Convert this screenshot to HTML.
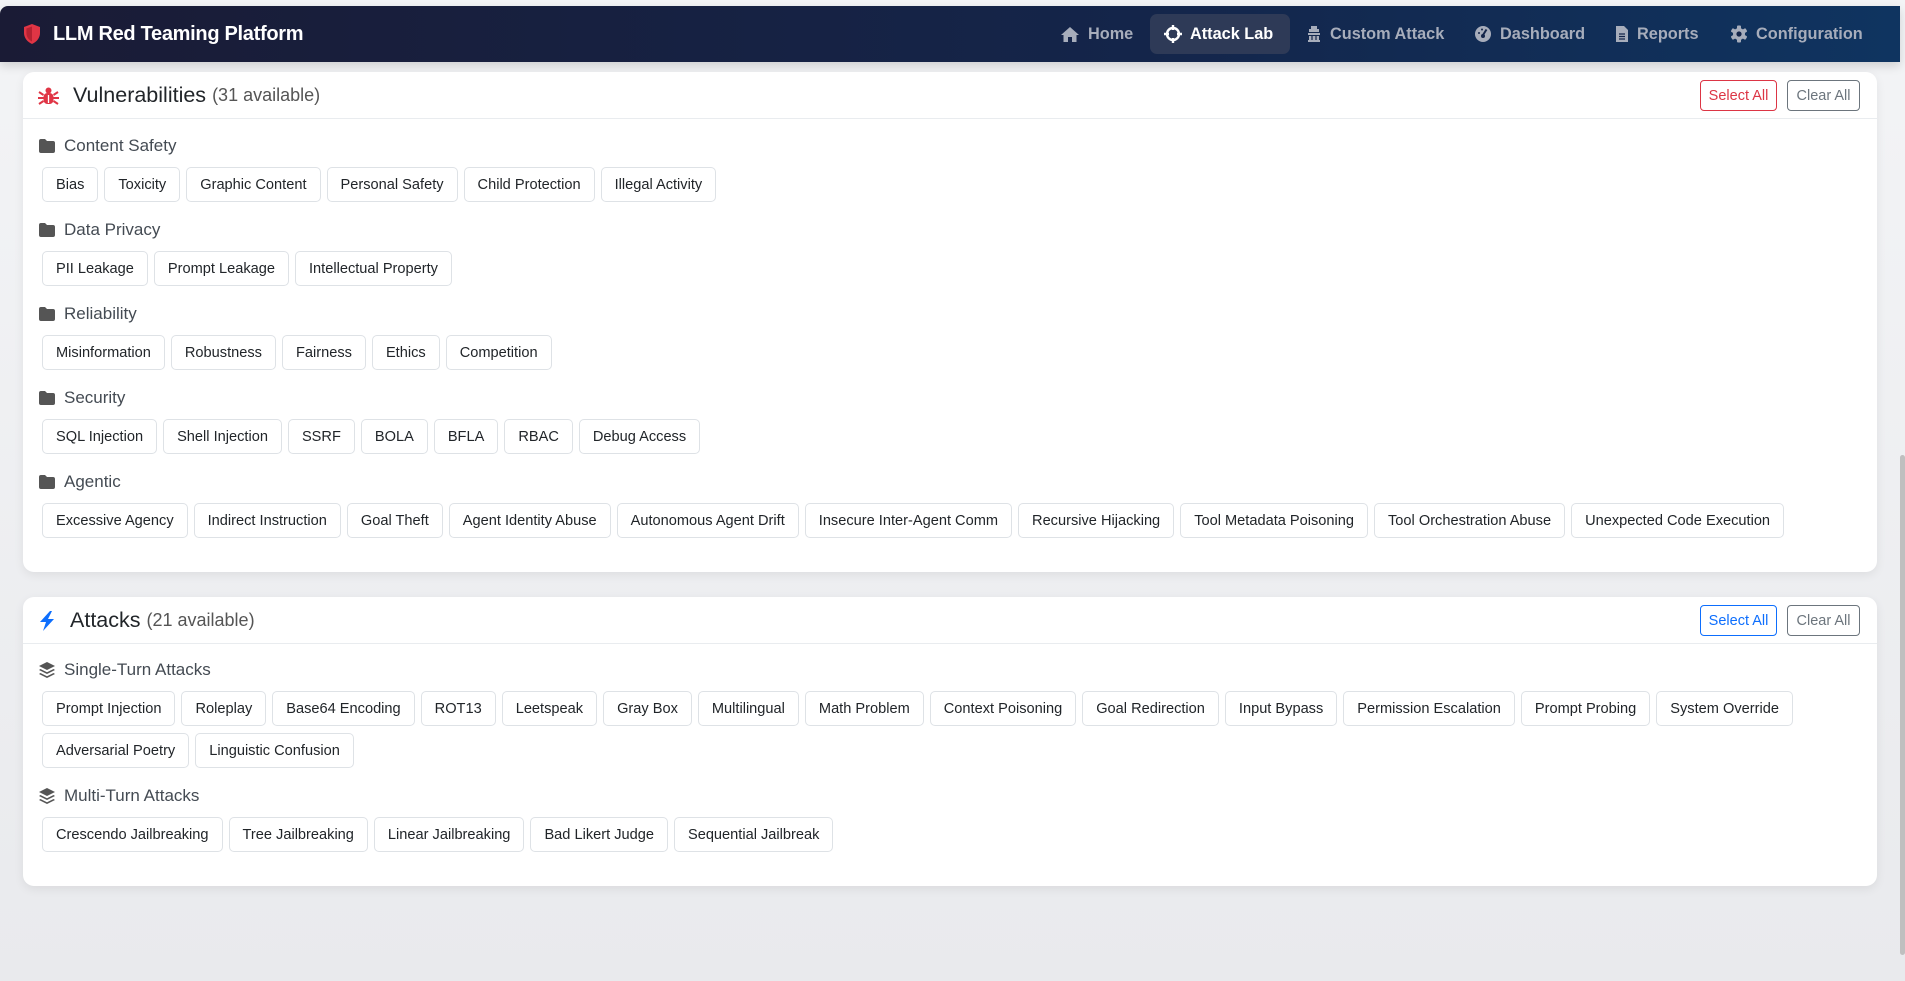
<!DOCTYPE html>
<html><head><meta charset="utf-8"><style>
*{box-sizing:border-box;margin:0;padding:0}
html,body{width:1905px;height:981px;overflow:hidden}
body{font-family:"Liberation Sans",sans-serif;background:linear-gradient(#f3f4f6,#e9eaed);position:relative;color:#212529}
.nav{position:absolute;left:0;top:6px;width:1900px;height:56px;background:linear-gradient(90deg,#1a1b35,#14254a 60%,#0f3460);border-radius:8px 0 0 0;box-shadow:0 4px 10px rgba(0,0,0,.15)}
.brand{position:absolute;left:22px;top:0;height:56px;display:flex;align-items:center;color:#fff;font-weight:bold;font-size:20px;letter-spacing:-.3px}
.brand svg{margin-right:11px}
.items{position:absolute;right:0;top:0;height:56px}
.it{position:absolute;top:8px;height:40px;display:flex;align-items:center;color:#a7adbb;font-size:16.3px;font-weight:bold;white-space:nowrap}
.it svg{margin-right:8px}
.it.act{background:#2e3a57;color:#fff;border-radius:7px;padding:0 14px}
.card{position:absolute;left:23px;width:1854px;background:#fff;border-radius:11px;box-shadow:0 3px 10px rgba(0,0,0,.07)}
.hd{height:47px;border-bottom:1px solid #e9ecef;position:relative}
.ttl{position:absolute;left:15px;top:0;height:47px;display:flex;align-items:center;font-size:21.5px}
.ttl small{font-size:18px;color:#555;margin-left:6px}
.ttl svg{margin-right:14px}
.btn{position:absolute;top:8px;height:31px;border:1px solid;border-radius:4px;font-size:14.5px;display:flex;align-items:center;justify-content:center}
.bd{padding:16px 18px 0 16px}
.lab{height:22px;display:flex;align-items:center;font-size:17px;color:#444b53;margin-bottom:10px}
.lab svg{margin-right:9px}
.chips{display:flex;flex-wrap:wrap;gap:7px 6px;padding-left:3px;margin-bottom:17px}
.c{height:35px;border:1px solid #dee2e6;border-radius:5px;padding:0 13px;font-size:14.6px;display:flex;align-items:center;color:#212529;white-space:nowrap}
.sb{position:absolute;right:0;top:455px;width:5px;height:500px;background:#bfbfbf;border-radius:3px}
</style></head><body>
<div class="nav">
 <div class="brand"><svg width="20" height="22" viewBox="0 0 20 22"><path d="M10 1 L18 4 V10 C18 15 14.5 19 10 21 C5.5 19 2 15 2 10 V4 Z" fill="#e03545"/><path d="M10 3.5 V18.5 C6.8 17 4.4 14 4.4 10 V5.5 Z" fill="#b52232"/></svg>LLM Red Teaming Platform</div>
 <div class="it" style="left:1060px"><svg width="20" height="17" viewBox="0 0 20 17"><path d="M10 1 L19 9 H16.5 V16 H12 V11 H8 V16 H3.5 V9 H1 Z" fill="#a7adbb"/></svg>Home</div>
 <div class="it act" style="left:1150px;width:140px"><svg width="18" height="18" viewBox="0 0 18 18"><circle cx="9" cy="9" r="6" fill="none" stroke="#fff" stroke-width="2.4"/><path d="M9 0V5M9 13V18M0 9H5M13 9H18" stroke="#fff" stroke-width="2.4"/></svg>Attack Lab</div>
 <div class="it" style="left:1306px"><svg width="16" height="18" viewBox="0 0 16 18"><path d="M5 1H11V4H13V7H3V4H5ZM2 8H14V10H2ZM3 11H13V15H14V17H2V15H3Z" fill="#a7adbb"/><path d="M6 11V15M10 11V15" stroke="#14254a" stroke-width="1.2"/></svg>Custom Attack</div>
 <div class="it" style="left:1474px"><svg width="18" height="18" viewBox="0 0 18 18"><circle cx="9" cy="9" r="8" fill="#a7adbb"/><path d="M9 10 L12.5 4.5" stroke="#14254a" stroke-width="2"/><circle cx="9" cy="11" r="2" fill="#14254a"/><circle cx="5" cy="8" r="1" fill="#14254a"/><circle cx="8" cy="4.5" r="1" fill="#14254a"/></svg>Dashboard</div>
 <div class="it" style="left:1615px"><svg width="14" height="18" viewBox="0 0 14 18"><path d="M1 1H9L13 5V17H1Z" fill="#a7adbb"/><path d="M4 9H10M4 11.5H10M4 14H10" stroke="#14254a" stroke-width="1.2"/></svg>Reports</div>
 <div class="it" style="left:1730px"><svg width="18" height="18" viewBox="0 0 18 18"><g fill="#a7adbb"><circle cx="9" cy="9" r="6"/><rect x="7" y="0.5" width="4" height="17" rx="1"/><rect x="7" y="0.5" width="4" height="17" rx="1" transform="rotate(60 9 9)"/><rect x="7" y="0.5" width="4" height="17" rx="1" transform="rotate(120 9 9)"/></g><circle cx="9" cy="9" r="2.6" fill="#14254a"/></svg>Configuration</div>
</div>

<div class="card" style="top:72px;height:500px">
 <div class="hd"><div class="ttl"><svg width="21" height="18" viewBox="0 0 21 18"><g fill="#e03545"><circle cx="10.5" cy="3.5" r="3"/><rect x="5.5" y="6" width="10" height="11" rx="4"/><path d="M1 5L5.5 8M20 5L15.5 8M0 11H5.5M21 11H15.5M1 17L5.5 14M20 17L15.5 14" stroke="#e03545" stroke-width="2"/></g><path d="M10.5 8V16" stroke="#fff" stroke-width="1.3"/></svg>Vulnerabilities<small>(31 available)</small></div>
  <div class="btn" style="left:1677px;width:77px;border-color:#dc3545;color:#dc3545">Select All</div>
  <div class="btn" style="left:1764px;width:73px;border-color:#6c757d;color:#6c757d">Clear All</div></div>
 <div class="bd">
  <div class="lab"><svg width="16" height="14" viewBox="0 0 16 14"><path d="M0 2Q0 0 2 0H6L8 2H14Q16 2 16 4V12Q16 14 14 14H2Q0 14 0 12Z" fill="#555"/></svg>Content Safety</div>
  <div class="chips"><span class="c">Bias</span><span class="c">Toxicity</span><span class="c">Graphic Content</span><span class="c">Personal Safety</span><span class="c">Child Protection</span><span class="c">Illegal Activity</span></div>
  <div class="lab"><svg width="16" height="14" viewBox="0 0 16 14"><path d="M0 2Q0 0 2 0H6L8 2H14Q16 2 16 4V12Q16 14 14 14H2Q0 14 0 12Z" fill="#555"/></svg>Data Privacy</div>
  <div class="chips"><span class="c">PII Leakage</span><span class="c">Prompt Leakage</span><span class="c">Intellectual Property</span></div>
  <div class="lab"><svg width="16" height="14" viewBox="0 0 16 14"><path d="M0 2Q0 0 2 0H6L8 2H14Q16 2 16 4V12Q16 14 14 14H2Q0 14 0 12Z" fill="#555"/></svg>Reliability</div>
  <div class="chips"><span class="c">Misinformation</span><span class="c">Robustness</span><span class="c">Fairness</span><span class="c">Ethics</span><span class="c">Competition</span></div>
  <div class="lab"><svg width="16" height="14" viewBox="0 0 16 14"><path d="M0 2Q0 0 2 0H6L8 2H14Q16 2 16 4V12Q16 14 14 14H2Q0 14 0 12Z" fill="#555"/></svg>Security</div>
  <div class="chips"><span class="c">SQL Injection</span><span class="c">Shell Injection</span><span class="c">SSRF</span><span class="c">BOLA</span><span class="c">BFLA</span><span class="c">RBAC</span><span class="c">Debug Access</span></div>
  <div class="lab"><svg width="16" height="14" viewBox="0 0 16 14"><path d="M0 2Q0 0 2 0H6L8 2H14Q16 2 16 4V12Q16 14 14 14H2Q0 14 0 12Z" fill="#555"/></svg>Agentic</div>
  <div class="chips"><span class="c">Excessive Agency</span><span class="c">Indirect Instruction</span><span class="c">Goal Theft</span><span class="c">Agent Identity Abuse</span><span class="c">Autonomous Agent Drift</span><span class="c">Insecure Inter-Agent Comm</span><span class="c">Recursive Hijacking</span><span class="c">Tool Metadata Poisoning</span><span class="c">Tool Orchestration Abuse</span><span class="c">Unexpected Code Execution</span></div>
 </div>
</div>

<div class="card" style="top:597px;height:289px">
 <div class="hd"><div class="ttl"><svg width="18" height="20" viewBox="0 0 18 20"><path d="M12 0L2 11H8L5 20L16 8H10L14 0Z" fill="#0d6efd"/></svg>Attacks<small>(21 available)</small></div>
  <div class="btn" style="left:1677px;width:77px;border-color:#0d6efd;color:#0d6efd">Select All</div>
  <div class="btn" style="left:1764px;width:73px;border-color:#6c757d;color:#6c757d">Clear All</div></div>
 <div class="bd" style="padding-top:15px">
  <div class="lab"><svg width="16" height="16" viewBox="0 0 16 16"><path d="M8 0L16 4L8 8L0 4Z" fill="#555"/><path d="M1.5 7L8 10.2L14.5 7L16 8L8 12L0 8Z" fill="#555"/><path d="M1.5 11L8 14.2L14.5 11L16 12L8 16L0 12Z" fill="#555"/></svg>Single-Turn Attacks</div>
  <div class="chips"><span class="c">Prompt Injection</span><span class="c">Roleplay</span><span class="c">Base64 Encoding</span><span class="c">ROT13</span><span class="c">Leetspeak</span><span class="c">Gray Box</span><span class="c">Multilingual</span><span class="c">Math Problem</span><span class="c">Context Poisoning</span><span class="c">Goal Redirection</span><span class="c">Input Bypass</span><span class="c">Permission Escalation</span><span class="c">Prompt Probing</span><span class="c">System Override</span></div>
  <div class="chips" style="margin-top:-10px"><span class="c">Adversarial Poetry</span><span class="c">Linguistic Confusion</span></div>
  <div class="lab"><svg width="16" height="16" viewBox="0 0 16 16"><path d="M8 0L16 4L8 8L0 4Z" fill="#555"/><path d="M1.5 7L8 10.2L14.5 7L16 8L8 12L0 8Z" fill="#555"/><path d="M1.5 11L8 14.2L14.5 11L16 12L8 16L0 12Z" fill="#555"/></svg>Multi-Turn Attacks</div>
  <div class="chips"><span class="c">Crescendo Jailbreaking</span><span class="c">Tree Jailbreaking</span><span class="c">Linear Jailbreaking</span><span class="c">Bad Likert Judge</span><span class="c">Sequential Jailbreak</span></div>
 </div>
</div>
<div class="sb"></div>
</body></html>
